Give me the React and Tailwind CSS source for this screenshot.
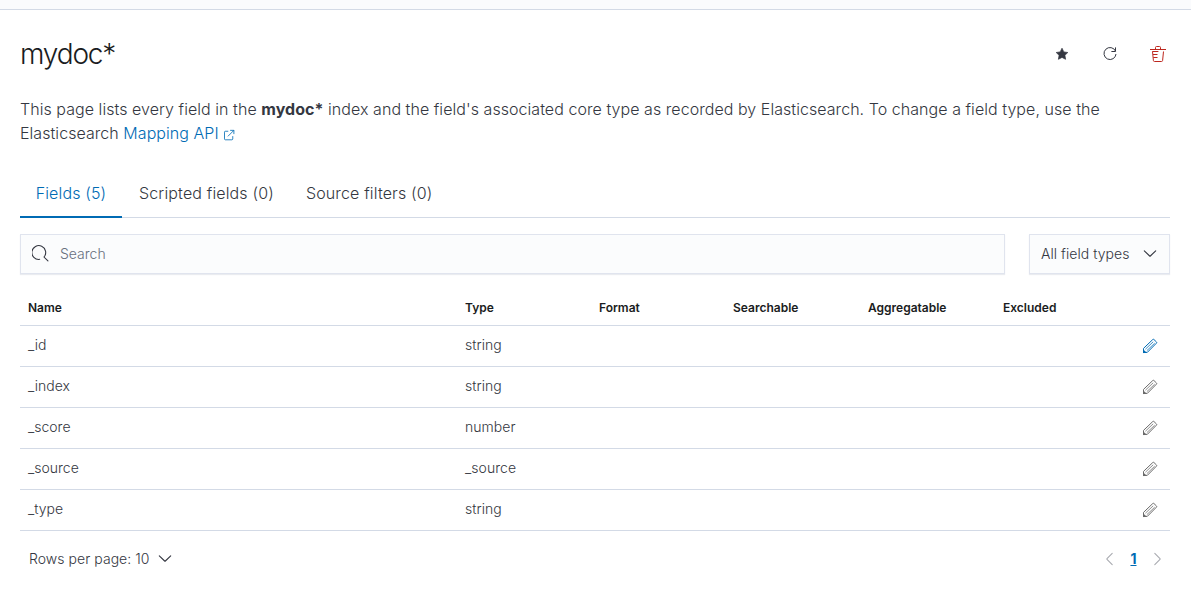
const rows = [
  { name: '_id', type: 'string', active: true },
  { name: '_index', type: 'string' },
  { name: '_score', type: 'number' },
  { name: '_source', type: '_source' },
  { name: '_type', type: 'string' },
];

const Svg = ({ className, children, size = 16 }) => (
  <svg width={size} height={size} viewBox="0 0 16 16" fill="none" stroke="currentColor" className={`shrink-0 ${className || ''}`}>
    {children}
  </svg>
);

const Chevron = ({ className }) => (
  <Svg className={className}>
    <path d="M2.3 4.8 7.65 10a.5.5 0 0 0 .7 0L13.7 4.8" strokeLinecap="round" strokeWidth="1.1" />
  </Svg>
);

const Pencil = ({ className }) => (
  <Svg className={className}>
    <path d="M1.5 10.4 10.7 1.6a.9.9 0 0 1 1.3 0l2.4 2.3a.9.9 0 0 1 0 1.3L5.4 14.3l-3.9.3z" />
    <path d="M3.4 11.2 11.2 3.8M4.9 12.6 12.7 5.2" strokeWidth=".75" />
    <path d="M1 15v-3.8l3.9 3.6z" fill="currentColor" stroke="none" />
  </Svg>
);

const cols = 'grid grid-cols-[437px_134px_134px_135px_135px_135px_40px] items-center border-b border-[#d3dae6]';

export default function App() {
  return (
    <div className="h-[595px] overflow-hidden bg-white font-['Inter',sans-serif] font-light text-[#343741]">
      <div className="h-[10px] border-b border-[#d3dae6] bg-[#fafbfd]" />
      <main className="w-[1170px] pl-5">
        <header className="flex h-[87px] items-center justify-between">
          <h1 className="pt-px text-[28px] leading-[40px] font-light tracking-[-1.15px] text-[#1a1c21]">mydoc*</h1>
          <div className="flex gap-8 pt-px pr-1">
            <Svg>
              <path d="m8 2.2 1.8 3.7 4 .6-2.9 2.8.7 4L8 11.4l-3.6 1.9.7-4-2.9-2.8 4-.6z" fill="currentColor" strokeWidth=".7" strokeLinejoin="round" />
            </Svg>
            <Svg>
              <path d="M13.5 5.1A6 6 0 1 0 14 8M13.5 1.4v4.1H9.4" />
            </Svg>
            <Svg className="text-[#bd271e]">
              <path d="M0 3.5h16M5.5 3.5v-2q0-1 1-1h3q1 0 1 1v2M2.5 5.5l.9 9q.1 1 1.1 1h7q1 0 1.1-1l.9-9M2.4 5.5h6M3 8.5h4.5M3.3 11.5h4.2" />
            </Svg>
          </div>
        </header>
        <p className="text-base leading-6 tracking-[0.053px]">
          This page lists every field in the <strong className="font-bold">mydoc*</strong> index and the field's associated core type as recorded by Elasticsearch. To change a field type, use the Elasticsearch{' '}
          <a className="text-[#006bb4]">
            Mapping API{' '}
            <Svg size={12} className="inline-block align-[-1.5px]">
              <path d="M7 3H3.2Q2 3 2 4.2v9Q2 14.4 3.2 14.4h8.6q1.2 0 1.2-1.2V9.5M9.5 1.8h5v5M14.5 1.8 6.5 9.8" strokeWidth="1.1" />
            </Svg>
          </a>
        </p>
        <nav className="mt-[25px] flex h-12 border-b border-[#d3dae6] text-base leading-6 tracking-[0.15px]">
          <div className="h-12 w-[102px] border-b-2 border-[#006bb4] pt-[11px] text-center text-[#006bb4]">Fields (5)</div>
          <div className="pt-[11px] pl-[17px]">Scripted fields (0)</div>
          <div className="pt-[11px] pl-8">Source filters (0)</div>
        </nav>
        <div className="mt-4 flex gap-6 text-sm">
          <div className="flex h-10 w-[985px] items-center border border-[#e0e4ee] bg-[#fbfcfd] pl-[11px] text-[#69707d] shadow-[0_1px_1px_rgba(152,162,179,0.2)]">
            <Svg className="mr-[11px] mb-0.5 text-[#343741]" size={17}>
              <path d="M7.2 13.5A6.5 6.5 0 1 1 11.3 11.3L15 15" strokeLinecap="round" />
            </Svg>
            Search
          </div>
          <div className="flex h-10 flex-1 items-center justify-between border border-[#e0e4ee] bg-[#fbfcfd] pr-[11px] pl-[11px] tracking-[0.05px] shadow-[0_1px_1px_rgba(152,162,179,0.2)]">
            All field types
            <Chevron />
          </div>
        </div>
        <div className="mt-4">
          <div className={`${cols} h-9 text-xs font-semibold text-[#1a1c21]`}>
            {['Name', 'Type', 'Format', 'Searchable', 'Aggregatable', 'Excluded'].map((h) => (
              <span key={h} className="pl-2">{h}</span>
            ))}
          </div>
          {rows.map((r) => (
            <div key={r.name} className={`${cols} h-[41px] text-sm`}>
              <span className="pb-0.5 pl-2">{r.name}</span>
              <span className="col-span-5 pb-0.5 pl-2 tracking-[0.05px]">{r.type}</span>
              <Pencil className={r.active ? 'ml-3 text-[#006bb4]' : 'ml-3 text-[#6b6b6b]'} />
            </div>
          ))}
        </div>
        <footer className="flex h-[56px] items-center justify-between pl-[9px] text-sm">
          <div className="flex items-center gap-[7px] tracking-[0.05px]">
            Rows per page: 10
            <Chevron />
          </div>
          <div className="flex items-center pr-1">
            <Chevron className="rotate-90 text-[#a9abb0]" />
            <span className="w-[33px] text-center font-bold text-[#006bb4] underline">1</span>
            <Chevron className="-rotate-90 text-[#a9abb0]" />
          </div>
        </footer>
      </main>
    </div>
  );
}
